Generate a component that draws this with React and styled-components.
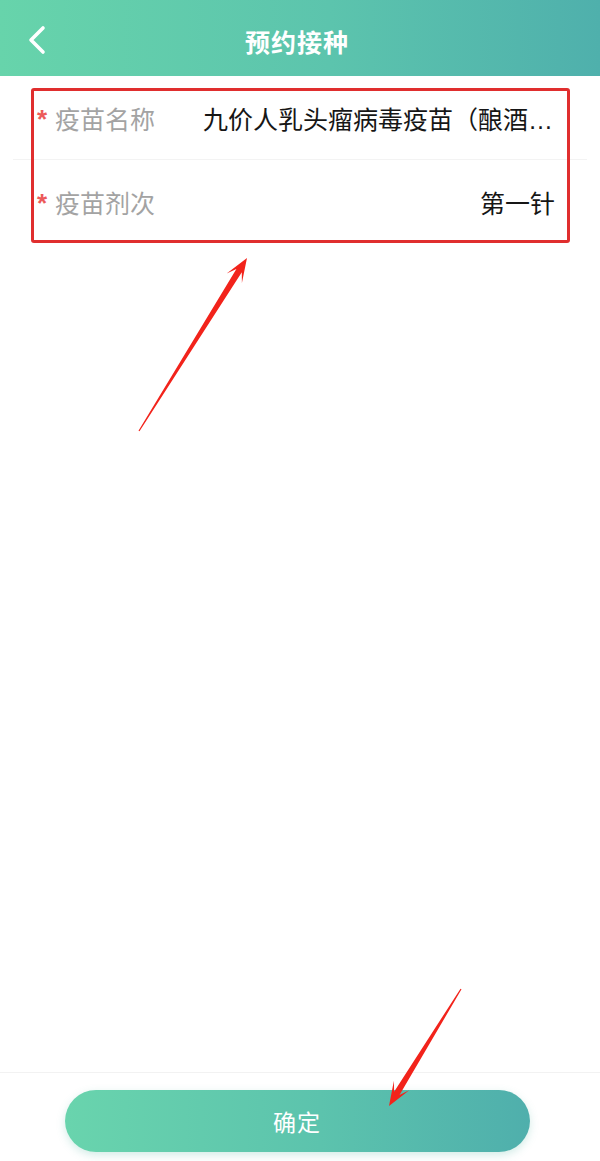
import React from "react";
import styled, { createGlobalStyle } from "styled-components";

const GlobalStyle = createGlobalStyle`
  html, body {
    margin: 0;
    padding: 0;
    background: #ffffff;
  }
  body {
    font-family: "Noto Sans CJK SC", "Noto Sans", sans-serif;
  }
`;

const fields = [
  { label: "疫苗名称", value: "九价人乳头瘤病毒疫苗（酿酒酵母）" },
  { label: "疫苗剂次", value: "第一针" },
];

// tapered annotation arrow, tail -> tip
function arrowPoints(x1, y1, x2, y2) {
  const dx = x2 - x1;
  const dy = y2 - y1;
  const len = Math.hypot(dx, dy);
  const ux = dx / len;
  const uy = dy / len;
  const nx = -uy;
  const ny = ux;
  const head = 24;
  const neck = head * 0.62;
  const at = (d, w) => [x2 - ux * d + nx * w, y2 - uy * d + ny * w];
  const pts = [
    [x1 + nx * 0.6, y1 + ny * 0.6],
    at(neck, 3.2),
    at(head, 9),
    [x2, y2],
    at(head, -9),
    at(neck, -3.2),
    [x1 - nx * 0.6, y1 - ny * 0.6],
  ];
  return pts.map((p) => p.map((v) => v.toFixed(1)).join(",")).join(" ");
}

function App() {
  return (
    <Page>
      <GlobalStyle />
      <Header>
        <BackButton>
          <svg width="24" height="32" viewBox="0 0 24 32">
            <path d="M17 4 L5 16 L17 28" fill="none" stroke="#fff" strokeWidth="3.6" strokeLinecap="round" strokeLinejoin="round" />
          </svg>
        </BackButton>
        <Title>预约接种</Title>
      </Header>

      <FieldList>
        {fields.map((f, i) => (
          <FieldRow key={f.label} $last={i === fields.length - 1}>
            <Required>*</Required>
            <Label>{f.label}</Label>
            <Value>{f.value}</Value>
          </FieldRow>
        ))}
        <Highlight />
      </FieldList>

      <Footer>
        <SubmitButton>确定</SubmitButton>
      </Footer>

      <Annotations viewBox="0 0 600 1161">
        <polygon points={arrowPoints(139, 431, 247, 258)} fill="#f2231b" />
        <polygon points={arrowPoints(461, 989, 389, 1106)} fill="#f2231b" />
      </Annotations>
    </Page>
  );
}

const Page = styled.div`
  position: relative;
  width: 600px;
  min-height: 1161px;
  display: flex;
  flex-direction: column;
  background: #fff;
  overflow: hidden;
`;

const Header = styled.div`
  height: 76px;
  position: relative;
  display: flex;
  align-items: center;
  justify-content: center;
  background: linear-gradient(90deg, #67d4ab 0%, #5cc4ad 55%, #4fb0ac 100%);
`;

const BackButton = styled.div`
  position: absolute;
  left: 26px;
  top: 24px;
  width: 24px;
  height: 32px;
  display: flex;
`;

const Title = styled.div`
  color: #fff;
  font-size: 25px;
  font-weight: 700;
  letter-spacing: 1px;
  margin-left: -6px;
  margin-top: 6px;
`;

const FieldList = styled.div`
  position: relative;
  padding: 0 13px;
`;

const FieldRow = styled.div`
  height: 84px;
  display: flex;
  align-items: center;
  padding: 0 32px 0 24px;
  border-bottom: ${(p) => (p.$last ? "none" : "1px solid #f3f3f3")};
  box-sizing: border-box;
`;

const Required = styled.span`
  width: 18px;
  color: #ec5a5a;
  font-family: "Liberation Sans", sans-serif;
  font-size: 26px;
  font-weight: 700;
  line-height: 1;
  position: relative;
  top: 1px;
`;

const Label = styled.span`
  color: #a3a3a3;
  font-size: 25px;
  width: 148px;
  flex-shrink: 0;
  white-space: nowrap;
`;

const Value = styled.span`
  flex: 1;
  min-width: 0;
  text-align: right;
  color: #161616;
  font-family: "Liberation Sans", "Noto Sans CJK SC", sans-serif;
  font-size: 25px;
  white-space: nowrap;
  overflow: hidden;
  text-overflow: ellipsis;
`;

const Highlight = styled.div`
  position: absolute;
  left: 31px;
  top: 12px;
  width: 539px;
  height: 155px;
  box-sizing: border-box;
  border: 3px solid #e02e2e;
  border-radius: 3px;
  pointer-events: none;
`;

const Footer = styled.div`
  margin-top: auto;
  border-top: 1px solid #f2f2f2;
  padding: 17px 0 9px;
  display: flex;
  justify-content: center;
`;

const SubmitButton = styled.button`
  width: 465px;
  height: 62px;
  margin-left: -6px;
  border: none;
  border-radius: 31px;
  background: linear-gradient(90deg, #69d4ad 0%, #5cc3ad 55%, #4fafac 100%);
  box-shadow: 0 3px 8px rgba(80, 180, 160, 0.25);
  color: #fff;
  font-family: "Noto Sans CJK SC", "Noto Sans", sans-serif;
  font-size: 23px;
  letter-spacing: 1px;
`;

const Annotations = styled.svg`
  position: absolute;
  left: 0;
  top: 0;
  width: 600px;
  height: 1161px;
  pointer-events: none;
`;

export default App;
